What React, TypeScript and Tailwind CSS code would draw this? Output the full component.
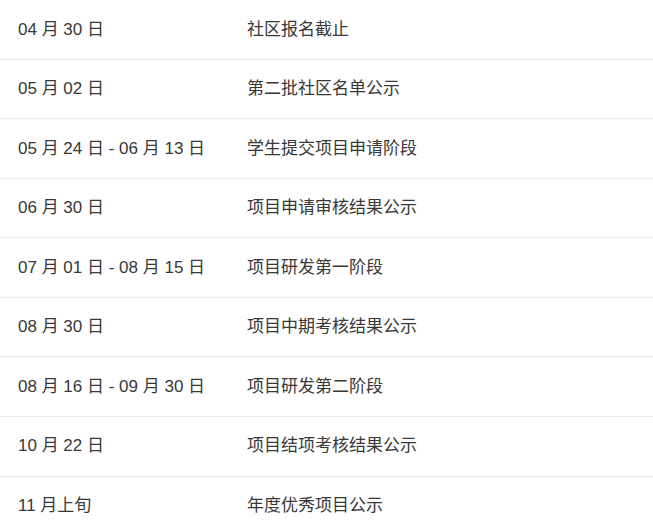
const rows: [string, string][] = [
  ["04 月 30 日", "社区报名截止"],
  ["05 月 02 日", "第二批社区名单公示"],
  ["05 月 24 日 - 06 月 13 日", "学生提交项目申请阶段"],
  ["06 月 30 日", "项目申请审核结果公示"],
  ["07 月 01 日 - 08 月 15 日", "项目研发第一阶段"],
  ["08 月 30 日", "项目中期考核结果公示"],
  ["08 月 16 日 - 09 月 30 日", "项目研发第二阶段"],
  ["10 月 22 日", "项目结项考核结果公示"],
  ["11 月上旬", "年度优秀项目公示"],
];

export default function App() {
  return (
    <div
      className="w-[653px] h-[530px] overflow-hidden bg-white text-[17px] text-[#383838]"
      style={{ fontFamily: '"Liberation Sans", Arial, "Noto Sans CJK SC", sans-serif' }}
    >
      {rows.map(([date, event]) => (
        <div
          key={date}
          className="flex items-center h-[59.57px] border-b border-[#ececec] box-border"
        >
          <div className="w-[247px] pl-[18px] shrink-0">{date}</div>
          <div>{event}</div>
        </div>
      ))}
    </div>
  );
}
